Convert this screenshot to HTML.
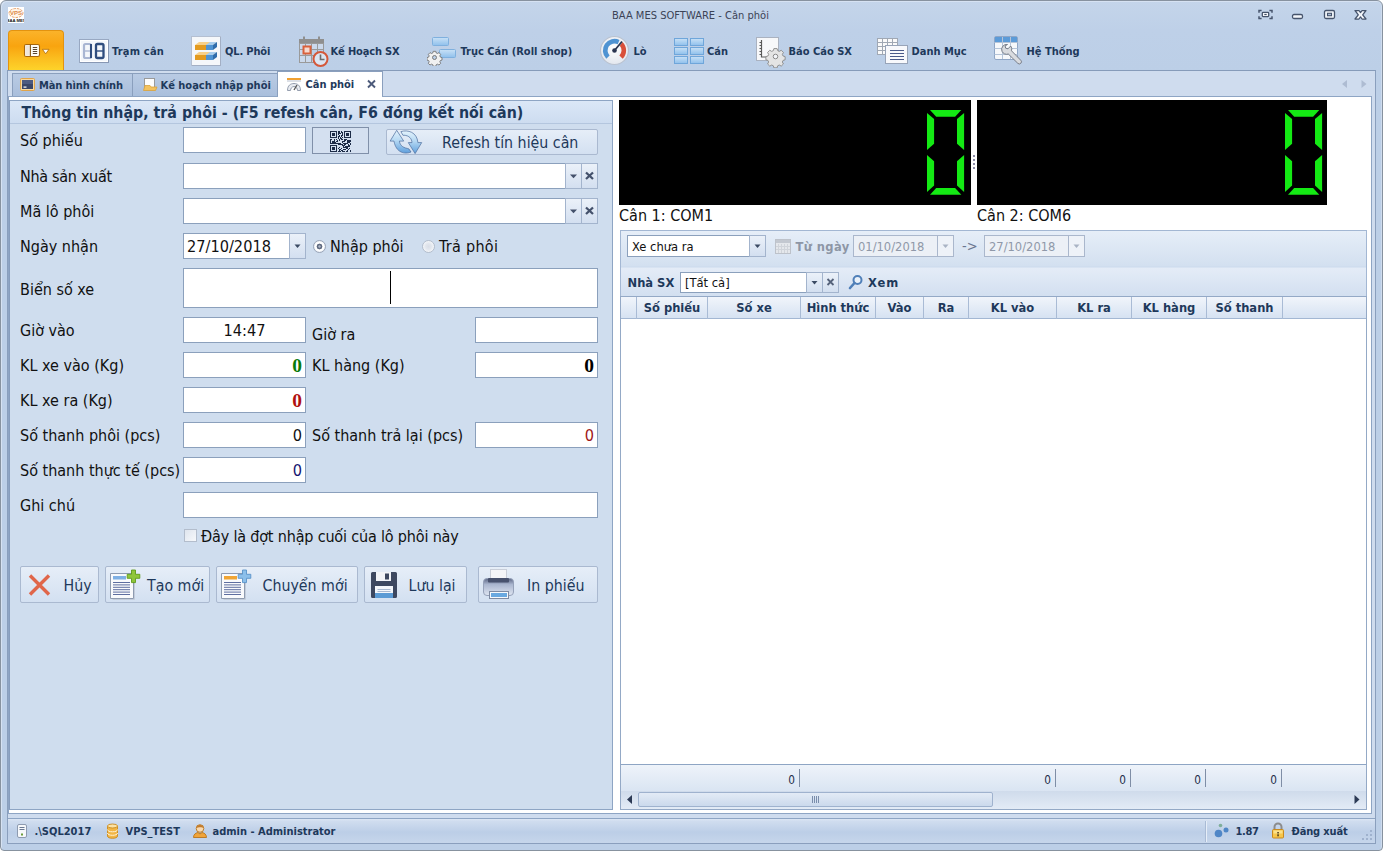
<!DOCTYPE html>
<html lang="vi">
<head>
<meta charset="utf-8">
<title>BAA MES SOFTWARE - Cân phôi</title>
<style>
*{box-sizing:border-box;margin:0;padding:0}
html,body{width:1383px;height:851px;overflow:hidden;background:#fff}
body{position:relative;font-family:"DejaVu Sans Condensed","Liberation Sans",sans-serif;font-size:11px;font-weight:bold;color:#1e395b}
.a{position:absolute}
.t{position:absolute;white-space:nowrap;line-height:1}
/* window frame */
#frame{left:0;top:0;width:1383px;height:851px;border:1px solid #87929f;border-radius:6px 6px 4px 4px;box-shadow:inset 1px 1px 0 #d6e2f2,inset -1px 0 0 #cfdcee;background:linear-gradient(#c4d5ea 0,#bed0e8 30px,#bccfe7 70px,#bccfe7 100%)}
#docframe{left:7px;top:70px;width:1369px;height:774px;border:1px solid #8a9fbd;border-top-color:#869bb9;background:#cfdcee}
#content{left:8px;top:96px;width:1364px;height:718px;background:#fff;border:1px solid #8ea5c4}
/* ribbon */
.rt{position:absolute;white-space:nowrap;line-height:12px;top:46px}
/* tabs */
.tab{position:absolute;top:73px;height:24px;border:1px solid #8a9fbd;border-bottom:none;background:linear-gradient(#b9cbe4,#a9bedb)}
.tabt{position:absolute;white-space:nowrap;line-height:12px;top:80px}
/* left panel */
#lp{left:9px;top:100px;width:604px;height:710px;background:#cfddee;border:1px solid #8ea5c4;border-left-color:#879dbd}
#lph{left:10px;top:101px;width:602px;height:23px;background:linear-gradient(#dbe7f7,#cddcf0);border-bottom:1px solid #b4c6de}
.lbl{position:absolute;white-space:nowrap;font-weight:normal;font-size:16px;line-height:20px;color:#111;left:20px}
.inp{position:absolute;background:#fff;border:1px solid #8ba0bc;height:26px;font-weight:normal;font-size:16.2px;color:#111;line-height:26px;overflow:hidden}
.btn{position:absolute;border:1px solid #aab9d0;border-radius:2px;background:linear-gradient(#e6eef8,#d3e0f1);font-weight:normal;font-size:15.6px;color:#1e395b}
.cb{position:absolute;width:17px;height:26px;border:1px solid #a3b4cd;background:linear-gradient(#ebf1f9,#d3dff0)}
.ser{font-family:"Liberation Serif",serif;font-weight:bold;font-size:19.5px;text-align:right;padding-right:3px}
.gs{top:297px;width:1px;height:22px;background:#a9bbd5}
.gt{position:absolute;top:301px;line-height:14px;font-size:12.800px;text-align:center;white-space:nowrap}
.fs{top:769px;width:1px;height:18px;background:#7f8ea6}
.ft{position:absolute;top:774px;line-height:13px;font-size:11.700px;font-weight:normal;text-align:right;color:#1e2e4a}
.st{position:absolute;top:826px;line-height:12px;white-space:nowrap}
</style>
</head>
<body>
<div class="a" id="frame"></div>

<!-- title bar -->
<div class="t" id="title" style="left:612px;top:9px;font-weight:normal;font-size:11.05px;line-height:13px;color:#3b4356">BAA MES SOFTWARE - Cân phôi</div>

<!-- ribbon placeholder -->
<div id="ribbon">
<!-- app button -->
<div class="a" style="left:8px;top:30px;width:56px;height:41px;border:1px solid #e3930f;border-bottom:none;border-radius:4px 4px 0 0;background:linear-gradient(#fbb32a 0,#f9a40f 38%,#fbbd1f 68%,#fdd52b 100%)"></div>
<svg class="a" style="left:22px;top:42px" width="30" height="18" viewBox="0 0 30 18">
 <rect x="2.500" y="2.500" width="15" height="12" rx="1.800" fill="#fffdf6" stroke="#a8660a" stroke-width="1.100"/>
 <rect x="3.300" y="3.300" width="4.600" height="10.400" fill="#efe6dc"/>
 <line x1="8.400" y1="2.500" x2="8.400" y2="14.500" stroke="#8a5a14" stroke-width="1.100"/>
 <path d="M10.800 5.500h4.400M10.800 7.500h4.400M10.800 9.500h4.400M10.800 11.500h4.400" stroke="#5a4630" stroke-width="1"/>
 <path d="M20.400 7.300h6.600l-3.300 4.600z" fill="#fffdf6" stroke="#b8740c" stroke-width=".9" stroke-linejoin="round"/>
</svg>

<!-- Tram can -->
<svg class="a" style="left:79px;top:39px" width="30" height="24" viewBox="0 0 30 24">
 <rect x=".5" y=".5" width="29" height="23" fill="#f4f7fb" stroke="#98a8c2"/><path d="M1 23.500h29M29.500 1v23" stroke="#8797b3" fill="none"/>
 <rect x="1.5" y="1.5" width="27" height="21" fill="none" stroke="#fff"/>
 <g fill="none" stroke="#a9b6d3" stroke-width="2.200" stroke-linejoin="round"><rect x="5" y="5" width="7" height="14" rx="1.5"/><line x1="5" y1="12" x2="12" y2="12" stroke-width="1.4"/></g>
 <g fill="none" stroke="#2f4d7e" stroke-width="2.300" stroke-linejoin="round"><rect x="17" y="5" width="7.5" height="14" rx="1.5"/><line x1="17" y1="12" x2="24.5" y2="12" stroke-width="1.4"/></g>
 <line x1="12" y1="5" x2="12" y2="19" stroke="#2f4d7e" stroke-width="2"/>
</svg>
<div class="rt" style="left:112px;letter-spacing:.2px">Trạm cân</div>

<!-- QL Phoi -->
<svg class="a" style="left:191px;top:36px" width="30" height="30" viewBox="0 0 30 30">
 <rect x=".5" y=".5" width="29" height="29" fill="#f5f7fa" stroke="#b4bfd1"/><path d="M1 29.500h29M29.500 1v29" stroke="#a3afc4" fill="none"/>
 <g id="bar1">
  <path d="M4 9l4-3h18l-4 3z" fill="#f7d08a"/><path d="M15 9l4-3h7l-4 3z" fill="#a8cdee"/>
  <rect x="4" y="9" width="11" height="5" fill="#e39a1f"/><rect x="15" y="9" width="7" height="5" fill="#4f93d2"/>
  <path d="M22 9l4-3v5l-4 3z" fill="#2f6cab"/>
 </g>
 <g transform="translate(0,10)">
  <path d="M4 9l4-3h18l-4 3z" fill="#f7d08a"/><path d="M15 9l4-3h7l-4 3z" fill="#a8cdee"/>
  <rect x="4" y="9" width="11" height="5" fill="#e39a1f"/><rect x="15" y="9" width="7" height="5" fill="#4f93d2"/>
  <path d="M22 9l4-3v5l-4 3z" fill="#2f6cab"/>
 </g>
</svg>
<div class="rt" style="left:225px;letter-spacing:-.15px">QL. Phôi</div>

<!-- Ke hoach SX -->
<svg class="a" style="left:298px;top:36px" width="32" height="32" viewBox="0 0 32 32">
 <rect x="1" y="3" width="25" height="4" fill="#8f8f8f"/>
 <rect x="5" y="0.5" width="2" height="4" fill="#8f8f8f"/><rect x="20" y="0.5" width="2" height="4" fill="#8f8f8f"/>
 <g stroke="#9a9a9a" stroke-width="1" fill="none">
  <rect x="1.5" y="7.500" width="24" height="19"/>
  <path d="M7.5 7v20M13.500 7v20M19.500 7v14M1 13.500h25M1 19.500h18"/>
 </g>
 <rect x="2" y="8" width="5" height="5" fill="#cbd9ec"/><rect x="8" y="8" width="5" height="5" fill="#cbd9ec"/><rect x="14" y="8" width="5" height="5" fill="#cbd9ec"/><rect x="20" y="8" width="5" height="5" fill="#cbd9ec"/>
 <rect x="2" y="14" width="5" height="5" fill="#cbd9ec"/><rect x="8" y="14" width="5" height="5" fill="#cbd9ec"/><rect x="2" y="20" width="5" height="6" fill="#cbd9ec"/><rect x="8" y="20" width="5" height="6" fill="#cbd9ec"/>
 <rect x="5.500" y="10.500" width="7" height="7" fill="#f6d9cf" stroke="#d9603b" stroke-width="2"/>
 <circle cx="22.500" cy="23" r="7" fill="#dbe5f2" stroke="#d4583a" stroke-width="2"/>
 <path d="M22.500 18.500v5h4" fill="none" stroke="#6d6d6d" stroke-width="1.600"/>
</svg>
<div class="rt" style="left:330.500px;letter-spacing:-.15px">Kế Hoạch SX</div>

<!-- Truc can -->
<svg class="a" style="left:427px;top:36px" width="30" height="30" viewBox="0 0 30 30">
 <defs><linearGradient id="gb" x1="0" y1="0" x2="0" y2="1"><stop offset="0" stop-color="#c9e1f6"/><stop offset="1" stop-color="#8fc0ec"/></linearGradient></defs>
 <rect x="5.500" y="1.500" width="16" height="8" rx="1" fill="url(#gb)" stroke="#7fb0de"/>
 <rect x="12.500" y="13.500" width="16" height="8" rx="1" fill="url(#gb)" stroke="#7fb0de"/>
 <g transform="translate(7.500,21.500)">
  <path d="M-1.300-6.500h2.600l.5 1.700 1.300.6 1.600-.9 1.800 1.800-.9 1.600.6 1.300 1.700.5v2.600l-1.700.5-.6 1.300.9 1.600-1.800 1.800-1.600-.9-1.300.6-.5 1.700h-2.600l-.5-1.700-1.300-.6-1.600.9-1.800-1.800.9-1.600-.6-1.300-1.700-.5v-2.600l1.700-.5.6-1.300-.9-1.600 1.800-1.800 1.600.9 1.300-.6z" fill="#f1f1f1" stroke="#6f6f6f" stroke-width=".9" transform="scale(.95)"/>
  <circle r="2" fill="#bcd0e8" stroke="#6f6f6f" stroke-width=".9"/>
 </g>
</svg>
<div class="rt" style="left:460.500px">Trục Cán (Roll shop)</div>

<!-- Lo -->
<svg class="a" style="left:599px;top:35px" width="31" height="31" viewBox="0 0 31 31">
 <defs><radialGradient id="gg" cx=".5" cy=".4" r=".6"><stop offset="0" stop-color="#ffffff"/><stop offset="1" stop-color="#e3e7ee"/></radialGradient></defs>
 <circle cx="15.500" cy="15.500" r="14" fill="url(#gg)" stroke="#b9c2d0" stroke-width="1.200"/>
 <path d="M7.300 23.700A11.600 11.600 0 0 1 20.500 5l-1.800 4.200A7 7 0 0 0 10.600 20.400z" fill="#4f93d2"/>
 <path d="M23.500 7.100A11.600 11.600 0 0 1 23.700 23.700l-3.300-3.300A7 7 0 0 0 20.800 10.800z" fill="#d9503a"/>
 <path d="M15.500 15.500L23 6.500" stroke="#2a3550" stroke-width="1.800"/>
 <circle cx="15.500" cy="15.500" r="2.300" fill="#2a3550"/>
</svg>
<div class="rt" style="left:633.500px">Lò</div>

<!-- Can -->
<svg class="a" style="left:674px;top:38px" width="30" height="27" viewBox="0 0 30 27">
 <g fill="url(#gb)" stroke="#6fa6da">
  <rect x=".5" y=".5" width="13" height="7"/><rect x="16.500" y=".5" width="13" height="7"/>
  <rect x=".5" y="9.500" width="13" height="7"/><rect x="16.500" y="9.500" width="13" height="7"/>
  <rect x=".5" y="18.500" width="13" height="7"/><rect x="16.500" y="18.500" width="13" height="7"/>
 </g>
</svg>
<div class="rt" style="left:707px">Cán</div>

<!-- Bao cao SX -->
<svg class="a" style="left:755px;top:36px" width="32" height="32" viewBox="0 0 32 32">
 <rect x="1.500" y="1.500" width="22" height="23" fill="#f7f8fa" stroke="#aab2c0"/>
 <path d="M6.500 4v17h6" fill="none" stroke="#5a5a5a" stroke-width="1.200"/>
 <path d="M4.500 6.500h2M4.500 9.500h2M4.500 12.500h2M4.500 15.500h2M4.500 18.500h2" stroke="#5a5a5a" stroke-width="1"/>
 <g transform="translate(20.500,20.500)">
  <path d="M-1.300-6.500h2.600l.5 1.700 1.300.6 1.600-.9 1.800 1.800-.9 1.600.6 1.300 1.700.5v2.600l-1.700.5-.6 1.300.9 1.600-1.800 1.800-1.600-.9-1.300.6-.5 1.700h-2.600l-.5-1.700-1.300-.6-1.600.9-1.800-1.800.9-1.600-.6-1.300-1.700-.5v-2.600l1.700-.5.6-1.300-.9-1.600 1.800-1.800 1.600.9 1.300-.6z" fill="#e4e4e4" stroke="#8a8a8a" stroke-width=".75" transform="scale(1.220)"/>
  <circle r="2.300" fill="#f4f6fa" stroke="#8a8a8a" stroke-width="1"/>
 </g>
</svg>
<div class="rt" style="left:788.500px">Báo Cáo SX</div>

<!-- Danh muc -->
<svg class="a" style="left:877px;top:38px" width="32" height="27" viewBox="0 0 32 27">
 <g stroke="#a0a8b4" fill="#fafafa"><rect x=".5" y=".5" width="20" height="16"/></g>
 <path d="M.5 4.500h20M.5 8.500h20M.5 12.500h20M5.500 .5v16M10.500 .5v16M15.500 .5v16" stroke="#a0a8b4" fill="none"/>
 <rect x="8.500" y="7.500" width="22" height="18" fill="#f8f9fc" stroke="#98a4b8"/>
 <path d="M13 12.500h14M13 15.500h14M13 18.500h14M13 21.500h14" stroke="#4a5a8a" stroke-width="1"/>
</svg>
<div class="rt" style="left:911.500px">Danh Mục</div>

<!-- He thong -->
<svg class="a" style="left:993px;top:35px" width="32" height="32" viewBox="0 0 32 32">
 <rect x="1.500" y="1.500" width="23" height="23" rx="1.500" fill="#f6f8fb" stroke="#8fa6c6"/>
 <rect x="2" y="2" width="22" height="5" fill="#5c9bd8"/>
 <path d="M1.500 7.500h23M1.500 13.500h23M1.500 19.500h23M9.500 2v22M17.500 2v22" stroke="#b5c4d8" fill="none"/>
 <path d="M14.500 9.500a5 5 0 0 0-5.500 6.800a5 5 0 0 0 6.300 2.700l9.500 9.300a2 2 0 0 0 3-3l-9.300-9.500a5 5 0 0 0-.8-4.800l-2.700 2.800-2.300-.6-.6-2.300z" fill="#d9dbdf" stroke="#777d88" stroke-width="1"/>
</svg>
<div class="rt" style="left:1026.500px">Hệ Thống</div>

<!-- window buttons -->
<svg class="a" style="left:1254px;top:6px" width="120" height="18" viewBox="0 0 120 18">
 <g fill="none" stroke="#46546c" stroke-width="1.300">
  <path d="M5 6.800v-2.300h2.600M15.400 4.500h2.600v2.300M18 10.200v2.300h-2.600M7.600 12.500h-2.600v-2.300" stroke-width="1.500"/>
  <rect x="8.300" y="6.400" width="6.400" height="4.200" rx=".8" fill="#f4f7fb"/>
  <rect x="10.300" y="7.900" width="2.400" height="1.200" fill="#46546c" stroke="none"/>
  <rect x="38.500" y="8.500" width="10" height="4" rx="1.500" fill="#f4f7fb"/>
  <rect x="70.500" y="4.500" width="10" height="8" rx="1.500" fill="#f4f7fb"/>
  <rect x="73.500" y="7.300" width="4" height="2.400" fill="#aebfd8" stroke-width="1.100"/>
 </g>
 <path d="M101 4.500h4l1.500 2.100 1.500-2.100h4l-3.300 4.300 3.300 4.200h-4l-1.500-2.100-1.500 2.100h-4l3.300-4.200z" fill="#f4f7fb" stroke="#46546c" stroke-width="1.250" stroke-linejoin="round"/>
</svg>

<!-- logo -->
<svg class="a" style="left:8px;top:7px" width="16" height="16" viewBox="0 0 16 16">
 <rect width="16" height="16" fill="#fff"/>
 <ellipse cx="8" cy="6" rx="7" ry="4.500" fill="#fff6ea" stroke="#e39a62" stroke-width=".9" stroke-dasharray="2.500 1"/>
 <text x="8" y="8.300" font-size="6" font-weight="bold" text-anchor="middle" fill="#dc8a4a" font-family="Liberation Sans,sans-serif">VPS</text>
 <text x="8" y="15" font-size="4.200" font-weight="bold" text-anchor="middle" fill="#111" font-family="Liberation Sans,sans-serif">BAA MES</text>
</svg>
</div>

<div class="a" id="docframe"></div>
<!-- tabs placeholder -->
<div id="tabs">
<div class="tab" style="left:12px;width:121px"></div>
<div class="tab" style="left:132px;width:146px"></div>
<div class="a" style="left:277px;top:71px;width:106px;height:26px;background:#fff;border:1px solid #8a9fbd;border-bottom:none"></div>
<!-- tab1 icon -->
<svg class="a" style="left:20px;top:78px" width="15" height="14" viewBox="0 0 15 14">
 <rect x=".5" y=".5" width="14" height="12" rx="1" fill="#f8d9a0" stroke="#e0a44a"/>
 <rect x="2" y="2" width="11" height="9" fill="#3a4668"/>
 <rect x="2" y="2" width="11" height="4" fill="#4d5a80"/>
 <rect x="3.500" y="8.500" width="3" height="1.200" fill="#fff"/>
</svg>
<div class="tabt" style="left:39px;letter-spacing:-.1px">Màn hình chính</div>
<!-- tab2 icon -->
<svg class="a" style="left:143px;top:78px" width="15" height="14" viewBox="0 0 15 14">
 <rect x="1.500" y=".5" width="10" height="10" fill="#fdfdfd" stroke="#9a9a9a"/>
 <path d="M.5 12.500l1.500-5h5l1 1.500h6l-1.500 3.500z" fill="#f3c25e" stroke="#d9a23a" stroke-width=".8"/>
</svg>
<div class="tabt" style="left:160.500px">Kế hoạch nhập phôi</div>
<!-- tab3 icon -->
<svg class="a" style="left:286px;top:77px" width="16" height="15" viewBox="0 0 16 15">
 <rect x="1" y="1" width="14" height="2" fill="#f0a030"/>
 <rect x="1" y="3.500" width="14" height="1" fill="#b9c2d0"/>
 <path d="M1.500 13.500c0-5 3-7 6.500-7s6.500 2 6.500 7h-3c0-2-1.500-4-3.500-4s-3.500 2-3.500 4z" fill="#e8ebf0" stroke="#8a94a6" stroke-width=".9"/>
 <path d="M8 13l3-5" stroke="#555" stroke-width="1.300"/>
</svg>
<div class="tabt" style="left:305.500px;top:79px">Cân phôi</div>
<svg class="a" style="left:366px;top:79px" width="11" height="10" viewBox="0 0 11 10"><path d="M2 1.500l7 7M9 1.500l-7 7" stroke="#4c5a7a" stroke-width="1.900"/></svg>
<!-- tab scroll arrows -->
<svg class="a" style="left:1340px;top:78px" width="30" height="12" viewBox="0 0 30 12"><path d="M7 2v8l-5-4z" fill="#aebcd2"/><path d="M21.500 2v8l5-4z" fill="#aebcd2"/></svg>
</div>

<div class="a" id="content"></div>

<div class="a" style="left:278px;top:96px;width:104px;height:1px;background:#fff"></div>
<!-- left panel -->
<div class="a" id="lp"></div>
<div class="a" id="lph"></div>
<div id="leftform">
<div class="t" style="left:21.500px;top:104px;font-size:15.820px;line-height:18px">Thông tin nhập, trả phôi - (F5 refesh cân, F6 đóng kết nối cân)</div>

<div class="lbl" style="top:131px">Số phiếu</div>
<div class="inp" style="left:183px;top:127px;width:123px"></div>
<div class="a" style="left:312px;top:127px;width:57px;height:27px;border:1px solid #8090a9;background:#d4e0f0"></div>
<svg class="a" style="left:330px;top:131px" width="21" height="21" viewBox="0 0 21 21" shape-rendering="crispEdges"><path d="M0 0h7v1h-7zM8 0h2v1h-2zM11 0h1v1h-1zM14 0h7v1h-7zM0 1h1v1h-1zM6 1h1v1h-1zM8 1h2v1h-2zM11 1h2v1h-2zM14 1h1v1h-1zM20 1h1v1h-1zM0 2h1v1h-1zM2 2h3v1h-3zM6 2h1v1h-1zM8 2h3v1h-3zM12 2h1v1h-1zM14 2h1v1h-1zM16 2h3v1h-3zM20 2h1v1h-1zM0 3h1v1h-1zM2 3h3v1h-3zM6 3h1v1h-1zM8 3h1v1h-1zM12 3h1v1h-1zM14 3h1v1h-1zM16 3h3v1h-3zM20 3h1v1h-1zM0 4h1v1h-1zM2 4h3v1h-3zM6 4h1v1h-1zM9 4h1v1h-1zM11 4h2v1h-2zM14 4h1v1h-1zM16 4h3v1h-3zM20 4h1v1h-1zM0 5h1v1h-1zM6 5h1v1h-1zM8 5h2v1h-2zM11 5h1v1h-1zM14 5h1v1h-1zM20 5h1v1h-1zM0 6h7v1h-7zM8 6h1v1h-1zM10 6h1v1h-1zM12 6h1v1h-1zM14 6h7v1h-7zM8 7h1v1h-1zM10 7h2v1h-2zM0 8h2v1h-2zM4 8h1v1h-1zM6 8h1v1h-1zM9 8h1v1h-1zM11 8h2v1h-2zM14 8h3v1h-3zM0 9h1v1h-1zM4 9h1v1h-1zM7 9h1v1h-1zM9 9h1v1h-1zM14 9h2v1h-2zM17 9h4v1h-4zM0 10h1v1h-1zM2 10h3v1h-3zM6 10h2v1h-2zM12 10h3v1h-3zM17 10h4v1h-4zM0 11h1v1h-1zM2 11h4v1h-4zM12 11h1v1h-1zM17 11h3v1h-3zM0 12h11v1h-11zM13 12h5v1h-5zM20 12h1v1h-1zM8 13h5v1h-5zM14 13h2v1h-2zM18 13h1v1h-1zM20 13h1v1h-1zM0 14h7v1h-7zM12 14h3v1h-3zM18 14h2v1h-2zM0 15h1v1h-1zM6 15h1v1h-1zM13 15h1v1h-1zM15 15h5v1h-5zM0 16h1v1h-1zM2 16h3v1h-3zM6 16h1v1h-1zM9 16h1v1h-1zM13 16h5v1h-5zM0 17h1v1h-1zM2 17h3v1h-3zM6 17h1v1h-1zM8 17h1v1h-1zM11 17h1v1h-1zM16 17h2v1h-2zM19 17h1v1h-1zM0 18h1v1h-1zM2 18h3v1h-3zM6 18h1v1h-1zM9 18h2v1h-2zM13 18h3v1h-3zM18 18h1v1h-1zM0 19h1v1h-1zM6 19h1v1h-1zM9 19h1v1h-1zM11 19h2v1h-2zM17 19h1v1h-1zM20 19h1v1h-1zM0 20h7v1h-7zM8 20h3v1h-3zM12 20h3v1h-3zM16 20h2v1h-2zM20 20h1v1h-1z" fill="#1c2b47"/></svg>
<div class="btn" style="left:386px;top:129px;width:212px;height:26px"></div>
<svg class="a" style="left:388px;top:128px" width="36" height="28" viewBox="388 128 36 28">
 <defs><linearGradient id="ga" x1="0" y1="0" x2="0" y2="1"><stop offset="0" stop-color="#e4f3fc"/><stop offset=".45" stop-color="#b5d8f3"/><stop offset="1" stop-color="#5f9fdc"/></linearGradient></defs>
 <path d="M396.700 130.300L403.700 141.100L399.400 141.100C399.800 144 401.500 147.500 407.700 148.500L409 149L411 152C405 154.500 396 153 394 141.100L390.100 141.100Z" fill="url(#ga)" stroke="#4b6c9c" stroke-width=".7" stroke-linejoin="round"/>
 <path d="M415.100 153.600L408.300 142.600L412 142.600C411.800 139 409.500 135.500 403.900 135.200L403 135.400L400.900 131.600C407.700 129.500 417 132 417.900 142.600L421.700 142.600Z" fill="url(#ga)" stroke="#4b6c9c" stroke-width=".7" stroke-linejoin="round"/>
</svg>
<div class="t" style="left:442px;top:134px;font-weight:normal;font-size:15.800px;line-height:18px">Refesh tín hiệu cân</div>

<div class="lbl" style="top:167px;letter-spacing:-.3px">Nhà sản xuất</div>
<div class="inp" style="left:183px;top:163px;width:415px"></div>
<div class="cb" style="left:565px;top:163px"></div><div class="cb" style="left:581px;top:163px"></div>
<svg class="a" style="left:565px;top:163px" width="33" height="26" viewBox="0 0 33 26"><path d="M5 11.500h7l-3.500 3.800z" fill="#44516b"/><path d="M21 9.500l7 6.500M28 9.500l-7 6.500" stroke="#44516b" stroke-width="2.300"/></svg>

<div class="lbl" style="top:202px">Mã lô phôi</div>
<div class="inp" style="left:183px;top:198px;width:415px"></div>
<div class="cb" style="left:565px;top:198px"></div><div class="cb" style="left:581px;top:198px"></div>
<svg class="a" style="left:565px;top:198px" width="33" height="26" viewBox="0 0 33 26"><path d="M5 11.500h7l-3.500 3.800z" fill="#44516b"/><path d="M21 9.500l7 6.500M28 9.500l-7 6.500" stroke="#44516b" stroke-width="2.300"/></svg>

<div class="lbl" style="top:237px">Ngày nhận</div>
<div class="inp" style="left:183px;top:233px;width:123px;padding-left:3px">27/10/2018</div>
<div class="cb" style="left:289px;top:233px"></div>
<svg class="a" style="left:289px;top:233px" width="17" height="26" viewBox="0 0 17 26"><path d="M5.500 11.500h6l-3 3.500z" fill="#3b4a63"/></svg>
<!-- radios -->
<div class="a" style="left:313px;top:240px;width:13px;height:13px;border-radius:50%;border:1px solid #9aa5b8;background:radial-gradient(circle,#aeb6c6 0,#aeb6c6 .8px,#5f6a80 1.600px,#5f6a80 2.600px,#fff 3.200px,#fff 4.200px,#e3e9f2 6px)"></div>
<div class="lbl" style="left:330px;top:237px">Nhập phôi</div>
<div class="a" style="left:422px;top:240px;width:13px;height:13px;border-radius:50%;border:1px solid #b3bdcc;background:radial-gradient(circle,#d9dee7 0,#e3e7ee 3px,#f6f8fb 6px)"></div>
<div class="lbl" style="left:439px;top:237px;letter-spacing:.3px">Trả phôi</div>

<div class="lbl" style="top:280px">Biển số xe</div>
<div class="inp" style="left:183px;top:268px;width:415px;height:40px"></div>
<div class="a" style="left:390px;top:271px;width:1px;height:33px;background:#000"></div>

<div class="lbl" style="top:321px">Giờ vào</div>
<div class="inp" style="left:183px;top:317px;width:123px;text-align:center">14:47</div>
<div class="lbl" style="left:312px;top:325px">Giờ ra</div>
<div class="inp" style="left:475px;top:317px;width:123px"></div>

<div class="lbl" style="top:356px">KL xe vào (Kg)</div>
<div class="inp ser" style="left:183px;top:352px;width:123px;color:#0a7a0a">0</div>
<div class="lbl" style="left:312px;top:356px">KL hàng (Kg)</div>
<div class="inp ser" style="left:475px;top:352px;width:123px;color:#000">0</div>

<div class="lbl" style="top:391px">KL xe ra (Kg)</div>
<div class="inp ser" style="left:183px;top:387px;width:123px;color:#b01010">0</div>

<div class="lbl" style="top:426px">Số thanh phôi (pcs)</div>
<div class="inp" style="left:183px;top:422px;width:123px;text-align:right;padding-right:3px">0</div>
<div class="lbl" style="left:312px;top:426px">Số thanh trả lại (pcs)</div>
<div class="inp" style="left:475px;top:422px;width:123px;text-align:right;padding-right:3px;color:#a01818">0</div>

<div class="lbl" style="top:461px">Số thanh thực tế (pcs)</div>
<div class="inp" style="left:183px;top:457px;width:123px;text-align:right;padding-right:3px;color:#151570">0</div>

<div class="lbl" style="top:496px">Ghi chú</div>
<div class="inp" style="left:183px;top:492px;width:415px"></div>

<div class="a" style="left:184px;top:529px;width:13px;height:13px;border:1px solid #b3bdcc;background:linear-gradient(135deg,#dfe5ee,#f6f8fb)"></div>
<div class="lbl" style="left:201px;top:527px;letter-spacing:-.17px">Đây là đợt nhập cuối của lô phôi này</div>

<!-- buttons -->
<div class="btn" style="left:20px;top:566px;width:79px;height:37px"></div>
<svg class="a" style="left:27px;top:573px" width="26" height="24" viewBox="0 0 26 24"><path d="M3 2.500l19 19M22 2.500l-19 19" stroke="#e0664a" stroke-width="3.400"/></svg>
<div class="t" style="left:63.500px;top:577px;font-weight:normal;font-size:15.800px;line-height:18px">Hủy</div>

<div class="btn" style="left:105px;top:566px;width:105px;height:37px"></div>
<svg class="a" style="left:109px;top:569px" width="32" height="32" viewBox="0 0 32 32">
 <path d="M1.500 4.500h23v25h-23z" fill="#f9fafc" stroke="#8e9bb0"/>
 <path d="M25.500 6v24.500h-22" fill="none" stroke="#c3ccda"/>
 <rect x="4" y="7" width="13" height="3.500" fill="#7fb0e4"/>
 <path d="M4 13.500h17M4 15.900h17M4 18.300h17M4 20.700h17M4 23.100h17M4 25.500h17" stroke="#5e6ea0" stroke-width="1"/>
 <path d="M22.500 1h4v4.300h4.300v4h-4.300v4.300h-4v-4.300h-4.300v-4h4.300z" fill="#8fc63a" stroke="#5f9a1a" stroke-width=".9"/>
</svg>
<div class="t" style="left:147px;top:577px;font-weight:normal;font-size:15.800px;line-height:18px">Tạo mới</div>

<div class="btn" style="left:216px;top:566px;width:142px;height:37px"></div>
<svg class="a" style="left:220px;top:569px" width="32" height="32" viewBox="0 0 32 32">
 <path d="M1.500 4.500h23v25h-23z" fill="#f9fafc" stroke="#8e9bb0"/>
 <path d="M25.500 6v24.500h-22" fill="none" stroke="#c3ccda"/>
 <rect x="4" y="7" width="13" height="3.500" fill="#f0a535"/>
 <path d="M4 13.500h17M4 15.900h17M4 18.300h17M4 20.700h17M4 23.100h17M4 25.500h17" stroke="#5e6ea0" stroke-width="1"/>
 <path d="M22.500 1h4v4.300h4.300v4h-4.300v4.300h-4v-4.300h-4.300v-4h4.300z" fill="#8cbfea" stroke="#5a93c8" stroke-width=".9"/>
</svg>
<div class="t" style="left:262.500px;top:577px;font-weight:normal;font-size:15.800px;line-height:18px">Chuyển mới</div>

<div class="btn" style="left:364px;top:566px;width:103px;height:37px"></div>
<svg class="a" style="left:370px;top:571px" width="28" height="28" viewBox="0 0 28 28">
 <path d="M1 2.500a1.500 1.500 0 0 1 1.500-1.500h23a1.500 1.500 0 0 1 1.500 1.500v23a1.500 1.500 0 0 1-1.500 1.500h-23a1.500 1.500 0 0 1-1.500-1.500z" fill="#3d4860"/>
 <rect x="6" y="1" width="15" height="9" fill="#f2f4f8"/>
 <rect x="15" y="2.500" width="4" height="6" fill="#3d4860"/>
 <rect x="5" y="15" width="18" height="12" fill="#f4f7fb"/>
 <rect x="5" y="22" width="18" height="5" fill="#5b9bd5"/>
 <path d="M7.500 18.500h13M7.500 20.500h13" stroke="#a9b9d0"/>
</svg>
<div class="t" style="left:408.500px;top:577px;font-weight:normal;font-size:15.800px;line-height:18px">Lưu lại</div>

<div class="btn" style="left:478px;top:566px;width:120px;height:37px"></div>
<svg class="a" style="left:482px;top:568px" width="34" height="34" viewBox="0 0 34 34">
 <defs><linearGradient id="gp" x1="0" y1="0" x2="0" y2="1"><stop offset="0" stop-color="#5a6482"/><stop offset=".35" stop-color="#aab6cf"/><stop offset="1" stop-color="#dfe6f2"/></linearGradient></defs>
 <rect x="8.500" y="1.500" width="16" height="11" fill="#f4f5f8" stroke="#c9ced8"/>
 <rect x="1.500" y="10.500" width="30" height="17" rx="3.500" fill="url(#gp)" stroke="#96a2ba"/>
 <rect x="6" y="10" width="21" height="4.500" rx="1" fill="#48526e"/>
 <rect x="7.500" y="23.500" width="19" height="7" fill="#f7f9fc" stroke="#7f8ba2"/>
 <rect x="9" y="25" width="16" height="4" fill="#6aa9e0"/>
</svg>
<div class="t" style="left:527px;top:577px;font-weight:normal;font-size:15.800px;line-height:18px">In phiếu</div>
</div>

<!-- right panel placeholder -->
<div id="right">
<!-- scale displays -->
<div class="a" style="left:619px;top:100px;width:352px;height:105px;background:#000"></div>
<div class="a" style="left:977px;top:100px;width:350px;height:105px;background:#000"></div>
<svg class="a" style="left:926px;top:109px" width="40" height="87" viewBox="926 109 40 87">
 <g id="seg0" fill="#14ea14">
  <polygon points="930,110 961.300,110 955.100,116.700 936.200,116.700"/>
  <polygon points="927,113 934.100,119.100 934.100,143.800 927,150"/>
  <polygon points="964.100,113 964.100,150 957,143.800 957,119.100"/>
  <polygon points="927,155.100 934.100,161.300 934.100,185.500 927,191.900"/>
  <polygon points="964.100,155.100 964.100,191.900 957,185.500 957,161.300"/>
  <polygon points="936.200,187.900 955.100,187.900 961.300,194.700 930,194.700"/>
 </g>
</svg>
<svg class="a" style="left:1284px;top:109px" width="40" height="87" viewBox="926 109 40 87"><use href="#seg0"/></svg>
<!-- splitter dots -->
<div class="a" style="left:973px;top:155px;width:2px;height:2px;background:#8c8ca6;box-shadow:0 4px 0 #8c8ca6,0 8px 0 #8c8ca6,0 12px 0 #8c8ca6"></div>
<div class="t" style="left:619px;top:206px;font-weight:normal;font-size:16px;line-height:20px;color:#111">Cân 1: COM1</div>
<div class="t" style="left:977px;top:206px;font-weight:normal;font-size:16px;line-height:20px;color:#111">Cân 2: COM6</div>

<!-- filter toolbar -->
<div class="a" style="left:620px;top:230px;width:747px;height:67px;border:1px solid #a3b7d3;background:linear-gradient(#e6eef8 0,#d3e0f0 35px,#cbdaed 36px,#e4ecf7 37px,#d2dff0 66px)"></div>
<div class="inp" style="left:627px;top:235px;width:139px;height:22px;font-size:12.800px;line-height:21px;padding-left:4px">Xe chưa ra</div>
<div class="cb" style="left:749px;top:235px;height:22px"></div>
<svg class="a" style="left:749px;top:235px" width="17" height="22" viewBox="0 0 17 22"><path d="M5.500 9.500h6l-3 3.500z" fill="#3b4a63"/></svg>
<svg class="a" style="left:775px;top:239px" width="16" height="15" viewBox="0 0 16 15">
 <rect x=".5" y=".5" width="15" height="14" fill="#e4e7eb" stroke="#bdc2ca"/>
 <rect x="1" y="1" width="14" height="3" fill="#c3c8d0"/>
 <path d="M3.500 5v9M6.500 5v9M9.500 5v9M12.500 5v9M1 7.500h14M1 10.500h14" stroke="#d0d4da"/>
</svg>
<div class="t" style="left:795.500px;top:240px;line-height:14px;font-size:12.800px;letter-spacing:.4px;color:#8d96a5">Từ ngày</div>
<div class="inp" style="left:853px;top:235px;width:101px;height:22px;font-size:12.800px;line-height:21px;padding-left:4px;background:#ecf0f6;color:#8f98a8;border-color:#aab7cc">01/10/2018</div>
<div class="cb" style="left:937px;top:235px;height:22px;border-color:#aab7cc;background:#eef2f8"></div>
<svg class="a" style="left:937px;top:235px" width="17" height="22" viewBox="0 0 17 22"><path d="M5.500 9.500h6l-3 3.500z" fill="#a9b3c4"/></svg>
<div class="t" style="left:962px;top:239px;line-height:14px;font-size:14.500px;font-weight:normal;color:#6b7790">-&gt;</div>
<div class="inp" style="left:984px;top:235px;width:101px;height:22px;font-size:12.800px;line-height:21px;padding-left:4px;background:#ecf0f6;color:#8f98a8;border-color:#aab7cc">27/10/2018</div>
<div class="cb" style="left:1068px;top:235px;height:22px;border-color:#aab7cc;background:#eef2f8"></div>
<svg class="a" style="left:1068px;top:235px" width="17" height="22" viewBox="0 0 17 22"><path d="M5.500 9.500h6l-3 3.500z" fill="#a9b3c4"/></svg>

<div class="t" style="left:627.500px;top:276px;line-height:14px;font-size:12.800px">Nhà SX</div>
<div class="inp" style="left:680px;top:272px;width:159px;height:21px;font-size:12.800px;line-height:19px;padding-left:4px">[Tất cả]</div>
<div class="cb" style="left:806px;top:272px;height:21px"></div><div class="cb" style="left:822px;top:272px;height:21px"></div>
<svg class="a" style="left:806px;top:272px" width="33" height="21" viewBox="0 0 33 21"><path d="M5.500 9h6l-3 3.500z" fill="#3b4a63"/><path d="M21.500 7l6 6M27.500 7l-6 6" stroke="#55627a" stroke-width="1.800"/></svg>
<svg class="a" style="left:848px;top:274px" width="16" height="16" viewBox="0 0 16 16"><circle cx="9.500" cy="6" r="4" fill="#e9f1fa" stroke="#4f7fb8" stroke-width="2"/><path d="M6.500 9l-4.500 5" stroke="#4f7fb8" stroke-width="2.600" stroke-linecap="round"/></svg>
<div class="t" style="left:868px;top:276px;line-height:14px;font-size:12.800px;letter-spacing:1px">Xem</div>

<!-- grid -->
<div class="a" style="left:620px;top:296px;width:747px;height:514px;border:1px solid #94a9c6;background:#fff"></div>
<div class="a" id="gh" style="left:621px;top:297px;width:745px;height:22px;background:linear-gradient(#f1f5fb,#d6e2f2);border-bottom:1px solid #a3b7d3"></div>
<div class="a gs" style="left:636px"></div><div class="a gs" style="left:707px"></div><div class="a gs" style="left:800px"></div><div class="a gs" style="left:875px"></div><div class="a gs" style="left:923px"></div><div class="a gs" style="left:968px"></div><div class="a gs" style="left:1056px"></div><div class="a gs" style="left:1131px"></div><div class="a gs" style="left:1206px"></div><div class="a gs" style="left:1282px"></div>
<div class="gt" style="left:637px;width:70px">Số phiếu</div>
<div class="gt" style="left:708px;width:92px">Số xe</div>
<div class="gt" style="left:801px;width:74px">Hình thức</div>
<div class="gt" style="left:876px;width:47px">Vào</div>
<div class="gt" style="left:924px;width:44px">Ra</div>
<div class="gt" style="left:969px;width:87px">KL vào</div>
<div class="gt" style="left:1057px;width:74px">KL ra</div>
<div class="gt" style="left:1132px;width:74px">KL hàng</div>
<div class="gt" style="left:1207px;width:75px">Số thanh</div>
<!-- footer -->
<div class="a" style="left:621px;top:764px;width:745px;height:28px;border-top:1px solid #8ea5c4;background:linear-gradient(#eef3fa,#d9e4f2)"></div>
<div class="a fs" style="left:799px"></div><div class="a fs" style="left:1055px"></div><div class="a fs" style="left:1130px"></div><div class="a fs" style="left:1205px"></div><div class="a fs" style="left:1281px"></div>
<div class="ft" style="left:700px;width:95px">0</div>
<div class="ft" style="left:960px;width:91px">0</div>
<div class="ft" style="left:1060px;width:66px">0</div>
<div class="ft" style="left:1135px;width:66px">0</div>
<div class="ft" style="left:1210px;width:67px">0</div>
<!-- scrollbar -->
<div class="a" style="left:621px;top:791px;width:745px;height:18px;background:linear-gradient(#cfdbeb,#e3ebf6)"></div>
<div class="a" style="left:638px;top:792px;width:355px;height:15px;border:1px solid #9fb2ce;border-radius:2px;background:linear-gradient(#e3ebf6,#cbd9ec)"></div>
<svg class="a" style="left:811px;top:795px" width="10" height="9" viewBox="0 0 10 9"><path d="M1.500 1v7M3.500 1v7M5.500 1v7M7.500 1v7" stroke="#7a8dab"/></svg>
<svg class="a" style="left:624px;top:794px" width="12" height="11" viewBox="0 0 12 11"><path d="M8 1v9l-5-4.500z" fill="#2c3a55"/></svg>
<svg class="a" style="left:1351px;top:794px" width="12" height="11" viewBox="0 0 12 11"><path d="M3.500 1v9l5-4.500z" fill="#2c3a55"/></svg>
</div>

<!-- status bar placeholder -->
<div id="status">
<div class="a" style="left:8px;top:818px;width:1367px;height:25px;border-top:1px solid #8ea5c4;background:linear-gradient(#dde7f4 0,#d0ddef 2px,#bccee7 55%,#c6d6eb 100%)"></div>
<svg class="a" style="left:16px;top:823px" width="12" height="16" viewBox="0 0 12 16">
 <rect x="1.500" y="1.500" width="9" height="13" rx="1.500" fill="#f6f8fb" stroke="#8e9bb0"/>
 <path d="M3.500 4.500h5M3.500 6.500h5" stroke="#6b7a94"/><rect x="5" y="10.500" width="2" height="2" fill="#6b9b3a"/>
</svg>
<div class="st" style="left:34.500px">.\SQL2017</div>
<svg class="a" style="left:106px;top:823px" width="14" height="16" viewBox="0 0 14 16">
 <path d="M1.500 3v10c0 1.500 2.200 2.300 5 2.300s5-.8 5-2.300v-10z" fill="#f2b646" stroke="#c98a1e" stroke-width=".9"/>
 <ellipse cx="6.500" cy="3" rx="5" ry="2" fill="#fbe2a6" stroke="#c98a1e" stroke-width=".9"/>
 <path d="M1.500 6.500c0 1.500 2.200 2.300 5 2.300s5-.8 5-2.300M1.500 10c0 1.500 2.200 2.300 5 2.300s5-.8 5-2.300" fill="none" stroke="#fff3d6" stroke-width="1"/>
</svg>
<div class="st" style="left:125.500px">VPS_TEST</div>
<svg class="a" style="left:192px;top:823px" width="16" height="16" viewBox="0 0 16 16">
 <path d="M1.500 14.500c0-3 2-4.500 4.500-5l2 1.500 2-1.500c2.500.5 4.500 2 4.500 5z" fill="#f0a43a" stroke="#b9741a" stroke-width=".9"/>
 <circle cx="8" cy="5.500" r="3.800" fill="#f8d9b0" stroke="#b9741a" stroke-width=".9"/>
 <path d="M4.300 5a3.800 3.800 0 0 1 7.400 0c-1.500-1-5.500-1-7.400 0z" fill="#c27a2a"/>
</svg>
<div class="st" style="left:212.500px">admin - Administrator</div>
<div class="a" style="left:1205px;top:821px;width:2px;height:21px;background:linear-gradient(90deg,#a9bbd5 50%,#e6eef8 50%)"></div>
<svg class="a" style="left:1213px;top:822px" width="18" height="18" viewBox="0 0 18 18">
 <circle cx="5.500" cy="11.500" r="3.800" fill="#4f86c6"/><circle cx="13" cy="8" r="2.500" fill="#4f86c6"/><circle cx="7.500" cy="3.500" r="1.800" fill="#7fae9a"/>
</svg>
<div class="st" style="left:1235.500px;letter-spacing:-.35px">1.87</div>
<svg class="a" style="left:1271px;top:822px" width="14" height="17" viewBox="0 0 14 17">
 <path d="M3.500 8v-3a3.500 3.500 0 0 1 7 0v3" fill="none" stroke="#8c8c8c" stroke-width="2"/>
 <rect x="1.500" y="7.500" width="11" height="8.500" rx="1" fill="#f7c64a" stroke="#c98a1e"/>
 <rect x="2.500" y="8.500" width="9" height="3" fill="#fbe08a"/>
 <rect x="6.300" y="10" width="1.500" height="1.500" fill="#4a3a1a"/><rect x="6.300" y="12.300" width="1.500" height="2" fill="#4a3a1a"/>
</svg>
<div class="st" style="left:1291.500px;letter-spacing:-.15px">Đăng xuất</div>
<svg class="a" style="left:1361px;top:829px" width="13" height="13" viewBox="0 0 13 13"><g fill="#9fb2ce"><rect x="9" y="1" width="2" height="2"/><rect x="5" y="5" width="2" height="2"/><rect x="9" y="5" width="2" height="2"/><rect x="1" y="9" width="2" height="2"/><rect x="5" y="9" width="2" height="2"/><rect x="9" y="9" width="2" height="2"/></g></svg>
</div>
</body>
</html>
